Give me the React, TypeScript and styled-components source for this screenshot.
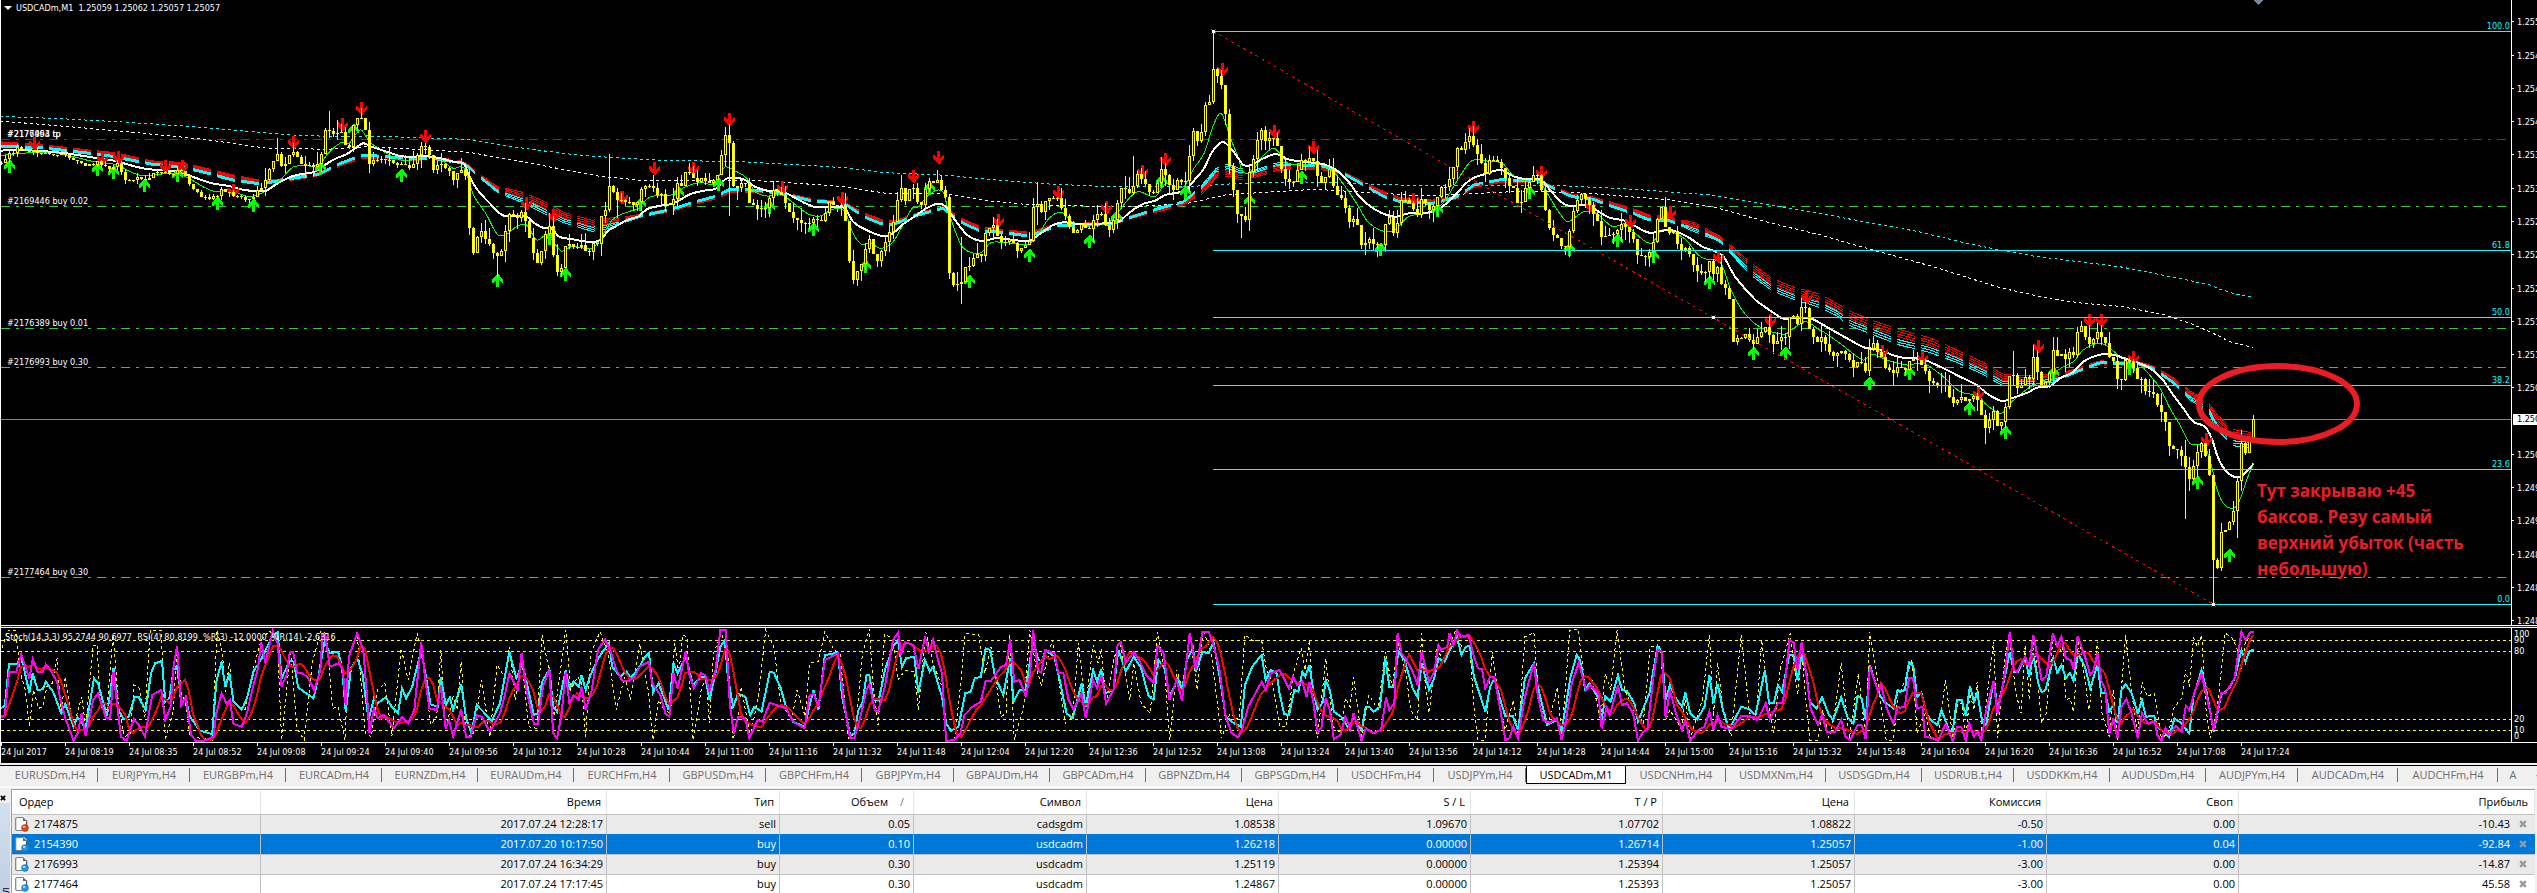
import React from "react";
import styled, { createGlobalStyle, css } from "styled-components";

const GlobalStyle = createGlobalStyle`
  * { box-sizing: border-box; }
  body { margin: 0; background: #f0f0f0; overflow: hidden; }
`;

const chartFont = css`
  font-family: "DejaVu Sans Condensed", "DejaVu Sans", sans-serif;
  font-size: 9px;
  line-height: 12px;
`;

/* ---------- recorded series ---------- */

type Pt = [number, number];
interface Block {
  x: number;
  y: number;
  sx: number;
  sy: number;
  d: string;
}

const parse = (d: string): Pt[] =>
  d
    .trim()
    .split(/\s+/)
    .map((p) => p.split(",").map(Number) as Pt);

/* joins blocks into one series that always advances in time */
const join = (blocks: Block[]): Pt[] => {
  const out: Pt[] = [];
  blocks.forEach((b) =>
    parse(b.d).forEach(([px, py]) => {
      const x = b.x + px / b.sx;
      if (!out.length || x > out[out.length - 1][0] + 0.5) out.push([x, b.y + py / b.sy]);
    })
  );
  return out;
};

const place = (blocks: Block[]): Pt[] =>
  blocks.flatMap((b) => parse(b.d).map(([px, py]) => [b.x + px / b.sx, b.y + py / b.sy] as Pt));

const frames = [
  { x: 0, y: 0, sx: 2.45, sy: 3 },
  { x: 600, y: 80, sx: 2.45, sy: 3 },
  { x: 1180, y: 0, sx: 2.45, sy: 3 },
  { x: 1700, y: 200, sx: 3, sy: 3 },
  { x: 2080, y: 280, sx: 3, sy: 3 },
];
const oscFrames = [
  { x: 0, y: -18, sx: 2.45, sy: 3 },
  { x: 640, y: -18, sx: 2.45, sy: 3 },
  { x: 1280, y: -18, sx: 2.45, sy: 3 },
  { x: 1900, y: -18, sx: 2.46, sy: 3 },
];
const blocks = (fr: typeof frames, ds: string[]): Block[] => ds.map((d, i) => ({ ...fr[i], d }));

const priceData = [
  "2,488 10,480 25,460 40,445 70,450 85,455 130,458 165,470 190,488 215,497 240,485 265,505 285,490 305,540 330,535 360,540 375,520 410,515 415,530 440,510 465,550 490,585 510,597 530,590 545,565 570,585 595,600 620,595 630,575 650,545 665,490 680,460 692,515 705,470 718,455 735,490 760,500 785,490 790,415 800,380 815,400 835,395 852,460 865,370 880,345 893,360 897,440 907,510 915,470 935,480 950,480 970,500 985,490 1005,500 1020,470 1035,435 1042,440 1052,470 1060,505 1085,490 1100,515 1112,540 1125,515 1138,510 1145,590 1152,750 1160,755 1170,700 1180,695 1195,730 1210,765 1218,770 1230,755 1238,690 1248,640 1258,640 1270,665 1280,620 1290,690 1300,720 1310,790 1320,795 1330,720 1345,680 1352,740 1358,800 1368,830 1378,800 1388,695 1397,745 1415,745 1428,730 1440,770 1450,730 1462,735 1470,650 1482,635 1495,540 1505,590 1520,605 1535,600 1550,620 1565,600",
  "75,375 90,360 102,320 112,318 128,320 135,345 148,335 160,370 178,375 182,300 195,325 205,290 215,265 222,285 232,310 245,295 255,295 270,315 280,295 290,270 300,200 308,155 318,200 320,265 328,340 340,310 355,310 368,380 380,380 400,390 408,370 418,335 430,335 445,345 455,380 465,400 475,410 490,425 505,432 515,430 525,415 538,435 548,405 558,370 590,372 595,420 605,430 612,590 622,600 632,560 642,550 652,495 662,475 672,540 682,540 692,500 705,465 717,440 722,385 735,315 748,370 758,320 770,322 780,380 790,370 800,300 812,315 822,290 830,315 845,340 848,490 858,610 870,625 885,605 895,555 905,555 917,528 935,525 945,440 965,440 975,475 985,490 1000,485 1008,435 1015,530 1030,500 1042,500 1052,480 1060,380 1072,378 1082,395 1092,360 1105,355 1118,355 1125,375 1138,400 1143,435 1155,460 1170,450 1180,425 1192,460 1205,430 1215,410 1230,400 1240,445 1250,445 1262,400 1270,340 1280,315 1293,345 1305,330 1310,275 1320,295 1330,300 1340,325 1352,345 1362,345 1368,265 1382,270 1392,310 1402,330 1415,300 1428,315 1438,290 1445,210 1455,140 1468,205 1478,100 1485,70 1499,70",
  "81,197 92,240 100,240 103,318 110,320 112,475 122,505 130,565 132,620 142,640 152,655 160,655 162,545 172,505 182,460 190,415 200,385 212,430 222,405 232,420 240,440 250,530 262,545 275,545 285,520 297,480 310,490 320,460 330,500 340,550 355,530 362,500 368,520 378,580 395,600 405,630 415,670 430,655 437,700 447,750 458,720 475,730 495,730 505,660 512,650 515,700 530,695 535,610 550,595 565,610 580,650 592,590 605,630 615,635 628,600 633,555 650,560 662,530 672,480 680,435 690,450 700,415 712,405 720,450 735,478 748,520 758,480 770,475 780,490 790,515 800,550 815,560 828,615 840,610 848,545 862,535 872,510 880,550 888,595 898,650 907,700 920,700 933,740 945,740 955,675 965,615 975,590 985,580 997,610 1008,630 1025,665 1035,730 1045,700 1060,710 1075,675 1088,680 1100,700 1112,720 1122,775 1132,770 1148,760 1162,715 1172,620 1185,625 1190,710 1205,680 1212,710 1222,755 1240,740 1250,770 1260,815 1272,822 1285,815 1297,780 1308,825 1318,800 1328,870 1338,870 1345,895 1348,1050 1358,1018 1370,1020 1380,995 1392,1015 1405,1028 1425,995 1437,975 1447,1025 1460,1040",
  "235,405 255,410 268,352 285,350 293,375 305,318 318,320 328,395 340,410 352,425 365,410 375,430 388,455 400,470 412,460 425,455 437,470 450,490 462,505 475,480 487,490 500,535 508,430 520,430 530,455 545,475 557,510 570,515 582,515 595,500 620,505 632,475 650,475 655,505 668,490 680,525 690,545 705,555 725,550 740,565 750,605 765,605 775,590 790,590 800,608 815,585 835,605 845,660 857,683 870,650 880,630 893,685 905,665 917,620 928,525 940,520 950,560 965,550 978,520 990,540 1000,460 1012,520 1025,560 1037,550 1048,510 1060,450 1073,475 1085,455 1097,475 1108,455 1120,470 1133,380 1145,385 1157,410 1170,435 1182,410 1195,385 1207,430 1220,435 1230,485 1243,480 1253,550",
  "113,310 123,305 125,245 137,235 150,250 162,275 173,305 185,295 197,340 210,342 222,350 234,385 246,400 258,440 270,520 282,500 294,505 306,530 318,565 330,600 342,540 354,510 366,485 378,540 390,605 402,910 413,850 424,745 436,750 448,720 460,695 472,595 484,485 496,520 506,520 509,415 520,415",
];

const slowData = [
  "0,452 40,450 100,453 150,458 200,467 240,475 280,482 320,496 360,507 400,511 440,516 480,534 520,550 560,558 600,570 650,573 680,550 720,527 770,516 790,500 820,477 850,462 870,445 890,430 910,440 940,452 980,468 1010,471 1040,468 1080,475 1110,485 1137,492 1150,530 1170,570 1200,610 1230,645 1260,648 1290,650 1310,670 1330,683 1350,685 1370,710 1400,717 1430,724 1460,725 1475,715 1490,692 1510,678 1540,658 1567,648",
  "60,425 100,402 120,385 150,377 180,370 220,343 250,333 285,325 310,296 350,297 380,320 410,332 440,332 465,345 500,368 530,382 570,380 600,385 620,425 650,448 690,468 715,462 740,435 770,410 800,385 825,372 845,378 870,420 900,465 935,483 970,475 1050,482 1080,460 1110,435 1135,427 1170,432 1240,430 1270,425 1300,395 1330,372 1360,362 1385,345 1420,337 1435,330 1460,295 1480,265 1500,215 1525,186 1545,205 1567,240",
  "120,445 140,480 155,495 175,495 200,478 235,462 265,478 300,485 350,492 380,508 410,540 440,590 480,630 525,650 560,640 600,640 640,622 670,590 710,540 740,525 785,510 820,530 850,538 885,540 910,575 945,615 1000,615 1020,630 1050,652 1090,662 1110,675 1150,698 1200,690 1240,708 1280,740 1330,768 1360,830 1410,900 1430,918 1450,935 1480,957 1510,953 1545,955 1567,968",
  "365,372 400,392 450,420 495,443 530,447 560,458 600,472 660,475 720,500 780,530 830,555 860,580 905,603 940,593 985,577 1010,563 1050,558 1080,535 1120,515 1150,485 1195,465 1230,463 1260,470",
  "125,233 165,245 210,265 245,295 280,345 310,385 340,425 375,440 395,475 415,535 440,575 470,592 495,580 520,552",
];

const fastData = [
  "0,467 50,460 130,458 180,470 230,485 290,495 310,510 350,527 430,520 470,540 500,562 530,575 560,570 610,590 640,580 670,555 690,535 720,500 785,495 800,465 835,428 855,430 870,405 885,390 905,425 930,447 970,475 1000,482 1040,470 1080,480 1110,505 1137,505 1160,585 1190,640 1220,705 1245,700 1265,680 1290,675 1315,720 1340,705 1375,753 1400,740 1450,745 1470,720 1500,660 1540,635 1567,625",
  "100,375 125,350 175,345 210,320 245,308 280,310 305,262 330,272 360,295 380,335 410,348 445,345 480,375 510,402 540,408 570,388 600,395 620,460 640,492 665,490 685,505 715,490 740,440 765,385 780,380 805,345 840,335 855,400 885,495 915,520 935,517 960,487 1050,492 1075,460 1100,415 1130,397 1160,428 1240,432 1270,395 1300,350 1320,335 1360,350 1385,312 1430,320 1455,265 1480,220 1500,145 1515,105 1525,105 1545,175 1567,245",
  "130,440 150,510 175,520 195,480 230,445 265,490 300,492 350,495 380,520 430,605 460,665 495,692 525,690 560,650 620,635 650,600 680,540 715,482 760,485 790,490 815,525 850,545 880,545 900,580 930,640 950,665 970,650 990,635 1020,640 1060,680 1090,672 1120,705 1155,730 1180,690 1205,695 1240,720 1270,765 1290,778 1325,790 1350,870 1380,935 1420,980 1480,1003 1500,988 1530,965 1550,975 1567,990",
  "370,395 420,430 490,480 515,462 560,480 620,495 670,490 730,530 780,575 835,588 860,615 905,640 930,610 1000,555 1050,545 1075,510 1120,485 1150,450 1195,430 1225,440 1260,470",
  "165,240 200,275 240,325 270,385 300,435 330,490 375,500 395,560 410,625 430,670 455,685 475,670 500,600 520,550",
];

const aquaBandData = [
  "0,438 100,443 220,460 280,470 340,485 370,492 450,502 510,520 570,540 640,552 700,538 780,523 830,492 890,465 1000,475 1060,475 1137,490 1180,535 1220,575 1280,602 1335,635 1380,662 1450,688 1490,680 1567,650",
  "100,408 170,390 220,370 285,348 320,327 390,332 440,340 510,360 600,372 650,412 690,432 720,433 770,408 840,385 890,430 930,452 985,457 1050,468 1120,438 1250,433 1310,408 1370,385 1430,365 1475,320 1510,270 1540,258 1567,272",
  "150,512 180,515 240,492 350,498 400,520 450,555 500,590 540,605 620,610 680,590 720,555 790,538 880,545 960,590 1010,597 1060,620 1110,640 1150,660 1200,662 1260,690 1320,720 1360,770 1400,820 1450,865 1500,890 1567,915",
  "410,340 450,370 510,393 600,428 690,450 770,480 850,517 910,552 1000,550 1070,540 1130,515 1200,488 1260,490",
  "165,248 220,265 280,308 330,355 385,390 410,440 460,490 520,495",
];
const redBandData = [
  "0,430 100,438 220,455 280,462 340,478 370,487 450,492 510,511 570,529 640,546 700,540 780,523 830,495 890,470 1000,477 1060,474 1137,489 1180,532 1220,565 1280,585 1335,615 1380,645 1450,670 1490,663 1567,648",
  "100,405 170,392 220,373 285,352 320,333 390,332 440,340 510,358 600,372 650,405 690,423 720,428 770,406 840,384 890,422 930,443 985,453 1050,461 1120,435 1250,432 1310,408 1370,390 1430,370 1475,335 1510,285 1540,278 1567,290",
  "150,530 180,527 240,505 350,505 400,520 450,550 500,580 540,598 620,605 680,592 720,558 790,542 880,545 960,587 1010,595 1060,612 1110,630 1150,650 1200,655 1260,675 1320,710 1360,755 1400,800 1450,845 1500,870 1567,893",
  "410,320 450,345 510,370 600,400 690,425 770,460 850,497 910,533 1000,535 1070,527 1130,510 1200,487 1260,489",
  "165,247 220,262 280,298 330,340 385,375 410,415 460,460 520,470",
];
const aquaDotData = [
  "0,349 150,356 300,366 450,378 600,393 700,404 800,409 900,408 1000,412 1140,418 1200,430 1300,448 1400,463 1470,470",
  "0,232 150,241 350,245 450,252 600,263 700,278 850,286 950,298 1100,312 1270,321 1440,320 1567,310",
  "200,548 280,545 400,549 600,558 800,555 900,555 1100,567 1300,585 1400,605 1567,640",
  "360,42 500,67 650,94 800,130 900,150 1000,168 1150,187 1260,200",
  "335,3 390,15 420,28 470,43 520,51",
];
const whiteDotData = [
  "0,363 200,383 350,400 500,418 650,444 800,448 900,440 1150,457 1300,490 1400,513 1470,529",
  "0,293 100,301 350,300 450,307 600,320 700,340 850,342 950,362 1050,374 1300,381 1440,370 1540,343",
  "90,588 130,583 220,576 330,568 430,575 600,588 680,583 850,573 1000,580 1200,600 1320,625 1450,670 1567,704",
  "365,106 500,145 700,200 900,263 1050,296 1150,310 1260,319",
  "180,90 250,103 330,130 390,155 450,185 520,203",
];
const sellData = [
  "83,428 250,475 288,470 405,497 446,498 572,570 719,427 837,373 885,324 1042,408 1288,608 1356,645 1523,590",
  "52,352 132,265 229,265 317,118 445,320 592,355 768,287 827,232 974,420 1121,337 1239,382 1327,273 1385,238",
  "102,208 230,392 327,442 572,597 719,382 885,515 1005,615 1102,664 1200,637 1317,767 1445,960",
  "317,292 545,453 665,470 833,578 1013,438 1168,360 1204,360",
  "160,230 377,477",
];
const buyData = [
  "22,497 237,508 276,517 354,556 434,525 531,610 620,615 785,503 865,390 982,525 1217,840 1344,715 1384,822",
  "99,373 190,340 290,312 414,380 521,447 649,557 806,325 903,604 1050,525 1197,482 1265,412 1375,302 1434,335",
  "168,602 296,530 491,748 629,630 854,575 952,746 1070,720 1158,767 1296,847 1403,1060 1482,1060",
  "507,550 627,518 806,623 914,695 1058,520",
  "147,265 350,606 446,826",
];

const stochData = [
  "0,322 12,315 22,185 40,185 52,133 72,205 80,147 92,185 105,185 112,163 122,178 140,215 148,270 160,325 180,392 190,370 200,310 210,378 228,270 240,250 260,325 270,325 278,185 296,380 310,392 328,328 340,345 355,380 373,255 395,240 405,330 418,290 425,170 434,107 444,285 455,260 468,375 480,392 500,392 523,380 530,310 543,250 555,280 563,270 572,342 592,350 605,310 618,240 632,175 640,97 650,160 668,63 680,100 690,230 702,195 710,127 718,125 728,188 740,188 755,205 770,240 785,180 790,75 797,75 808,170 830,160 840,180 847,285 855,140 875,70 890,120 900,270 905,370 916,295 925,325 940,315 965,355 985,320 1000,340 1015,300 1032,97 1042,210 1052,295 1070,300 1080,225 1092,355 1100,330 1110,380 1130,297 1142,380 1152,382 1168,315 1180,320 1200,365 1225,310 1237,255 1248,190 1268,240 1278,130 1290,240 1308,342 1318,342 1330,230 1346,178 1355,370 1365,385 1375,320 1386,185 1395,280 1405,255 1418,270 1425,230 1435,300 1450,240 1465,120 1482,88 1495,120 1510,180 1525,213 1540,213 1555,200 1567,170",
  "0,155 22,155 30,220 50,255 62,310 72,320 82,190 92,235 112,125 120,190 132,235 150,190 160,195 170,245 185,180 197,60 210,60 220,280 230,372 240,320 258,325 268,385 288,330 300,335 318,278 345,290 358,295 375,335 403,355 415,260 425,250 437,290 453,150 485,130 500,280 515,385 525,385 540,320 555,240 562,222 575,300 583,305 600,230 620,90 632,68 640,130 650,97 670,105 682,178 698,80 708,125 718,88 728,140 740,190 750,393 770,390 785,370 795,315 815,290 835,275 847,212 860,212 885,170 897,165 907,88 917,215 930,210 945,258 955,200 963,60 975,180 983,188 993,120 1015,130 1025,190 1037,190 1050,270 1062,298 1082,250 1092,325 1110,210 1120,235 1130,195 1142,280 1160,240 1170,105 1178,97 1190,158 1210,125 1225,155 1240,195 1258,218 1268,107 1283,130 1297,270 1315,210 1328,272 1347,68 1362,180 1378,65 1393,65 1405,105 1420,180 1435,320 1450,370 1465,382 1475,360 1490,290 1510,245 1523,215 1533,240 1545,190 1567,180",
  "0,210 22,235 32,200 42,225 55,215 65,260 72,215 82,280 92,368 102,350 112,265 122,300 132,388 148,375 160,320 172,355 180,310 200,392 210,355 230,370 248,358 260,262 268,300 280,280 288,70 298,130 310,150 325,185 337,225 347,125 365,215 378,185 388,105 395,120 410,110 415,70 425,105 434,62 443,80 462,75 475,140 485,175 495,178 503,235 515,200 525,200 540,300 552,390 562,385 572,350 583,385 600,260 622,160 632,260 645,330 660,338 678,325 690,390 700,335 715,220 732,158 750,240 760,225 780,250 788,355 800,295 808,315 828,225 838,285 850,280 865,310 877,392 890,365 900,360 915,200 925,118 935,125 945,325 955,240 970,310 985,360 993,330 1005,392 1025,360 1040,350 1052,305 1062,360 1072,315 1082,350 1105,358 1130,318 1150,318 1170,330 1190,280 1200,328 1220,280 1232,280 1248,90 1258,97 1268,180 1278,97 1288,180 1300,295 1318,345 1328,315 1340,365 1360,365 1375,330 1385,380 1397,390 1415,345 1425,345 1435,388 1445,170 1465,245 1473,225 1485,290 1497,325 1503,340 1513,290",
  "0,293 12,290 22,205 32,205 42,295 55,290 62,380 82,385 93,393 112,342 130,393 140,350 150,350 162,393 170,340 182,380 192,365 200,392 212,300 230,212 240,312 258,190 270,65 280,180 288,185 308,140 318,170 328,75 340,150 348,210 360,200 376,70 387,108 397,80 408,145 420,150 427,178 437,78 455,140 468,195 475,185 486,128 495,210 505,240 515,372 525,325 535,385 545,290 557,268 570,310 585,385 595,310 610,340 627,335 633,375 643,393 653,355 662,375 678,348 693,365 703,288 712,300 725,245 742,193 755,260 772,360 790,250 800,250 823,205 832,130 840,65 850,90 862,67 870,67",
];
const rsiData = [
  "0,298 12,285 22,163 42,163 52,140 72,248 80,190 92,240 105,238 112,215 130,245 150,310 160,282 180,350 190,322 210,355 230,205 240,220 262,318 278,175 290,300 303,327 315,320 330,260 340,262 357,300 370,190 380,160 397,153 405,275 415,265 425,180 434,170 444,280 455,262 465,320 490,362 520,372 530,215 543,155 552,230 562,190 572,275 592,300 605,265 622,180 632,165 645,135 668,75 680,67 690,205 710,152 720,155 730,232 750,250 768,265 780,200 795,95 808,130 828,125 838,170 847,305 860,175 875,145 888,190 903,330 916,265 925,280 945,262 960,290 975,310 985,235 995,265 1010,230 1032,120 1042,190 1055,283 1072,290 1080,200 1092,285 1102,262 1110,300 1130,222 1142,325 1155,370 1168,285 1205,332 1225,280 1248,125 1265,205 1280,160 1308,315 1318,310 1328,215 1346,178 1355,290 1365,305 1386,180 1395,235 1405,215 1418,230 1425,195 1435,240 1445,200 1465,145 1492,100 1500,170 1520,200 1535,183 1545,205 1567,170",
  "0,130 10,145 22,130 32,248 45,220 55,250 70,300 82,160 92,190 112,140 130,225 150,200 160,200 170,270 185,190 197,110 208,90 215,200 228,290 240,252 258,260 270,315 280,290 298,305 318,185 328,188 345,235 360,300 375,335 403,350 425,240 437,300 453,135 485,128 495,260 515,375 525,372 535,300 545,280 555,195 562,195 572,270 585,270 600,180 620,110 632,90 642,170 652,145 672,140 682,248 698,150 710,185 718,170 730,220 740,260 750,340 762,362 780,350 797,250 810,245 820,205 835,200 847,115 858,120 870,200 890,255 907,145 915,275 930,240 945,240 963,90 975,148 985,155 993,120 1015,140 1030,220 1045,310 1060,325 1082,220 1092,290 1110,180 1120,215 1130,178 1140,250 1160,240 1172,120 1190,185 1210,140 1228,175 1245,255 1258,270 1270,150 1285,175 1297,260 1318,205 1328,240 1340,150 1355,115 1362,185 1378,125 1393,130 1405,95 1420,200 1435,320 1455,340 1472,350 1482,225 1500,170 1523,135 1533,210 1545,180 1560,190 1567,250",
  "0,285 10,312 22,315 35,240 45,245 55,185 62,200 72,165 82,245 92,300 105,275 112,210 122,240 132,305 150,320 170,358 180,320 200,360 210,292 220,292 230,305 245,290 258,145 268,230 278,230 290,125 305,150 325,235 337,262 347,160 365,240 378,205 388,145 403,155 420,110 434,85 445,135 455,110 465,108 475,200 490,255 503,305 515,230 525,205 540,270 552,318 570,318 583,360 600,205 622,160 635,250 655,345 678,330 690,360 700,290 712,200 727,135 735,150 748,240 758,220 780,265 788,330 797,258 810,275 828,195 838,240 850,243 868,280 877,335 890,295 905,250 925,108 935,125 945,270 955,225 970,265 985,290 993,248 1005,310 1022,328 1040,290 1052,195 1062,280 1072,222 1085,300 1100,358 1115,325 1130,290 1150,298 1165,315 1188,180 1198,278 1210,278 1220,225 1230,245 1248,135 1258,135 1268,210 1278,135 1290,190 1298,275 1315,295 1328,262 1345,315 1355,330 1375,262 1390,320 1405,340 1415,258 1425,265 1435,330 1445,165 1465,245 1480,275 1503,295 1513,240",
  "0,245 12,240 22,157 33,170 42,262 53,248 65,310 75,330 92,345 102,300 122,365 130,362 140,270 152,270 162,318 172,228 182,275 190,248 203,340 212,345 230,212 240,290 258,200 270,125 280,185 290,185 308,145 318,200 328,130 340,220 348,247 358,240 377,145 387,188 397,165 408,205 418,188 427,212 437,130 455,170 468,235 486,162 495,250 505,250 515,305 525,285 535,340 545,240 555,223 570,250 585,310 595,270 605,320 625,318 633,350 650,365 662,382 675,325 690,338 712,370 722,260 742,180 752,230 772,365 790,255 810,235 825,200 832,160 840,120 850,155 860,122 870,120",
];
const williamsData = [
  "0,130 20,60 38,60 50,190 62,240 72,350 82,240 95,295 105,290 115,230 128,220 140,145 150,310 160,200 180,350 200,260 210,350 228,105 238,105 246,290 262,300 277,75 290,280 305,380 320,370 328,225 340,230 355,320 368,60 395,60 405,390 425,300 434,110 444,250 455,280 465,380 520,390 532,60 545,130 552,245 562,160 572,280 600,300 622,170 640,90 660,62 680,100 690,390 712,120 728,355 745,390 765,160 785,65 800,70 815,295 828,290 845,390 855,130 875,70 895,370 910,380 925,240 943,220 960,380 983,115 1000,210 1022,70 1035,130 1055,345 1070,320 1080,120 1092,360 1110,260 1120,300 1130,155 1142,385 1160,370 1180,210 1200,380 1218,165 1235,200 1248,110 1262,270 1278,140 1295,350 1315,355 1328,75 1345,180 1358,320 1386,60 1398,240 1415,200 1425,220 1435,380 1448,130 1470,65 1490,130 1510,300 1530,200 1545,270 1567,100",
  "0,90 20,240 32,390 45,270 60,300 75,310 85,100 95,190 105,75 115,80 130,390 150,240 162,200 170,340 180,130 200,70 215,130 228,390 240,330 248,230 270,380 290,260 308,60 328,110 345,280 372,330 385,240 405,320 415,160 437,155 453,65 475,120 490,130 510,385 528,370 545,130 562,58 570,210 583,345 600,70 620,90 632,210 650,180 672,185 682,300 700,65 718,160 740,230 750,390 770,390 785,230 797,70 830,75 845,190 860,110 885,320 897,310 905,75 917,390 940,290 955,60 970,170 983,225 1010,90 1025,200 1042,340 1060,320 1074,100 1092,290 1110,105 1122,160 1130,115 1142,280 1160,150 1175,95 1200,270 1210,160 1228,280 1250,310 1268,65 1285,180 1298,390 1315,180 1330,240 1347,70 1365,240 1380,60 1400,130 1425,385 1445,310 1468,330 1482,75 1500,90 1523,90 1535,180 1550,220 1567,350",
  "0,380 15,350 35,180 52,115 62,180 72,90 82,290 92,385 112,145 130,350 150,370 160,265 172,290 180,200 200,380 218,255 240,300 258,125 275,230 290,100 310,200 320,300 337,330 347,70 355,210 365,310 385,110 400,160 430,62 445,110 465,110 475,290 485,390 503,390 520,125 540,300 552,360 572,270 583,385 600,80 622,68 635,280 655,350 680,230 690,385 710,62 730,58 748,230 765,210 785,330 797,190 810,240 826,60 845,240 870,310 890,340 907,110 932,110 945,330 955,300 983,355 993,270 1005,385 1035,270 1052,75 1062,320 1072,160 1085,290 1105,380 1130,75 1150,310 1168,310 1180,90 1200,300 1210,370 1225,180 1250,70 1268,255 1278,130 1298,390 1318,390 1330,300 1345,385 1360,300 1375,160 1395,385 1417,190 1435,385 1445,65 1465,220 1485,390 1503,390 1515,240",
  "0,250 15,200 30,150 42,370 62,310 75,385 92,390 112,210 130,385 142,280 152,280 162,385 172,250 182,300 190,215 203,385 215,250 230,95 240,385 258,140 268,70 285,250 298,310 308,105 318,270 330,75 348,340 360,310 377,75 390,130 400,110 408,270 418,265 427,305 440,80 465,300 486,95 497,310 515,380 525,240 535,390 555,75 570,250 585,370 595,215 608,260 625,250 643,385 660,370 675,290 693,265 703,180 712,230 722,85 732,110 742,75 752,290 763,385 780,300 800,70 815,80 828,110 840,180 850,90 862,85 870,95",
];

/* ---------- series helpers ---------- */

const BAR = 4;
const BARS = 564;
const barX = (i: number) => 1 + i * BAR;

const at = (s: Pt[], x: number): number => {
  if (x <= s[0][0]) return s[0][1];
  for (let i = 1; i < s.length; i++) {
    if (x <= s[i][0]) {
      const [x0, y0] = s[i - 1];
      const [x1, y1] = s[i];
      return y0 + ((y1 - y0) * (x - x0)) / (x1 - x0);
    }
  }
  return s[s.length - 1][1];
};

const line = (pts: Pt[]) => pts.map(([x, y]) => `${x.toFixed(1)},${y.toFixed(1)}`).join(" ");

/* Catmull-Rom curve, rendered as cubic Béziers */
const smooth = (p: Pt[]): string => {
  let d = `M${p[0][0].toFixed(1)} ${p[0][1].toFixed(1)}`;
  for (let i = 0; i < p.length - 1; i++) {
    const a = p[Math.max(0, i - 1)];
    const b = p[i];
    const c = p[i + 1];
    const e = p[Math.min(p.length - 1, i + 2)];
    const t = (c[0] - b[0]) / 3;
    const sb = (c[1] - a[1]) / (c[0] - a[0]);
    const sc = (e[1] - b[1]) / (e[0] - b[0]);
    d += `C${(b[0] + t).toFixed(1)} ${(b[1] + sb * t).toFixed(1)} ${(c[0] - t).toFixed(1)} ${(c[1] - sc * t).toFixed(1)} ${c[0].toFixed(1)} ${c[1].toFixed(1)}`;
  }
  return d;
};

const noise = (i: number) => {
  const v = Math.sin(i * 127.1 + 11.7) * 43758.5453;
  return v - Math.floor(v);
};

const price = join(blocks(frames, priceData));
const aquaBand = join(blocks(frames, aquaBandData));
const redBand = join(blocks(frames, redBandData));
const stoch = join(blocks(oscFrames, stochData));
const rsi = join(blocks(oscFrames, rsiData));
const williams = join(blocks(oscFrames, williamsData));

const signal: Pt[] = Array.from({ length: BARS }, (_, i) => {
  const x = barX(i);
  const v = [0, 1, 2, 3].reduce((a, k) => a + at(stoch, x - k * BAR), 0) / 4;
  return [x, v] as Pt;
});

interface Candle {
  x: number;
  top: number;
  bottom: number;
  high: number;
  low: number;
  up: boolean;
}

/* wicks that stand far out of the usual range: bar x -> [high y, low y] */
const spikes: Record<number, [number, number]> = {
  1213: [31, 104],
  277: [138, 157],
  329: [111, 138],
  497: [252, 278],
  609: [154, 212],
  617: [188, 218],
  729: [124, 216],
  961: [237, 304],
  1037: [182, 225],
  1133: [156, 195],
  1241: [215, 238],
  1985: [410, 444],
  2013: [351, 385],
  2185: [440, 519],
  2213: [482, 604],
  2237: [476, 538],
  2253: [415, 419],
};

const candles: Candle[] = Array.from({ length: BARS }, (_, i) => {
  const x = barX(i);
  const open = at(price, x - BAR) + (noise(i) - 0.5) * 4;
  const close = at(price, x) + (noise(i + 1) - 0.5) * 4;
  const calm = x < 260 ? 0.35 : 1;
  const top = Math.round(Math.min(open, close));
  const bottom = Math.max(top + 1, Math.round(Math.max(open, close)));
  const reach = (k: number) => Math.round(Math.pow(noise(i * 3 + k), 2) * 13 * calm);
  const s = spikes[x];
  return {
    x,
    top,
    bottom,
    high: s ? Math.min(s[0], top) : top - reach(1),
    low: s ? Math.max(s[1], bottom) : bottom + reach(2),
    up: close < open,
  };
});

const band = (s: Pt[], other: Pt[], n: number) => {
  let d = "";
  for (let k = 0; k < n; k++) {
    for (let x = 1; x < 2253; x += 24) {
      for (let q = x; q <= Math.min(x + 18, 2254); q += 3) {
        const apart = Math.abs(at(s, q) - at(other, q));
        const gap = apart < 4 ? 1 : Math.min(2.5, apart / 3);
        const y = at(s, q) + (k - (n - 1) / 2) * gap;
        d += `${q === x ? "M" : "L"}${q} ${y.toFixed(1)}`;
      }
    }
  }
  return d;
};

/* ---------- layout ---------- */

const Page = styled.div`
  display: flex;
  flex-direction: column;
  height: 100vh;
  overflow: hidden;
  background: #f0f0f0;
`;

const ChartWindow = styled.section`
  flex: none;
  background: #000;
  border-left: 1px solid #fff;
  color: #fff;
  ${chartFont}
`;

const PlotRow = styled.div<{ $height: number }>`
  display: flex;
  height: ${(p) => p.$height}px;
  border-bottom: 1px solid #fff;
`;

const Divider = styled.div`
  height: 2px;
  background: #2a2a2a;
  border-bottom: 1px solid #fff;
`;

const Plot = styled.div`
  flex: 1;
  min-width: 0;
  position: relative;
  border-right: 1px solid #fff;
`;

const Canvas = styled.svg`
  display: block;
  width: 100%;
  height: 100%;
  overflow: hidden;
  text {
    ${chartFont}
    white-space: pre;
  }
`;

const Scale = styled.div`
  flex: none;
  width: 25px;
  position: relative;
  overflow: hidden;
`;

const ScaleMark = styled.span<{ $boxed?: boolean; $tick?: boolean; $left: number }>`
  position: absolute;
  left: ${(p) => (p.$boxed ? 1 : 0)}px;
  right: 0;
  height: ${(p) => (p.$boxed ? 11 : 12)}px;
  line-height: ${(p) => (p.$boxed ? 11 : 12)}px;
  padding-left: ${(p) => p.$left - (p.$boxed ? 1 : 0)}px;
  white-space: nowrap;
  color: ${(p) => (p.$boxed ? "#000" : "#fff")};
  background: ${(p) => (p.$boxed ? "#fff" : "none")};
  &::before {
    content: "";
    display: ${(p) => (p.$tick ? "block" : "none")};
    position: absolute;
    left: 0;
    top: 5px;
    width: 2px;
    height: 1px;
    background: #fff;
  }
`;

const Note = styled.p`
  position: absolute;
  left: 2256px;
  top: 478px;
  width: 216px;
  margin: 0;
  color: #ed1c24;
  font: bold 17px/26px "Open Sans", "Noto Sans", sans-serif;
`;

const TimeScale = styled.ol`
  display: flex;
  height: 20px;
  margin: 0;
  padding: 0;
  list-style: none;
  overflow: hidden;
`;

const TimeMark = styled.li`
  flex: none;
  width: 64px;
  padding-top: 3px;
  white-space: nowrap;
  position: relative;
  &::before {
    content: "";
    position: absolute;
    left: 0;
    top: 0;
    width: 1px;
    height: 3px;
    background: #fff;
  }
`;

const TabBar = styled.nav`
  flex: none;
  display: flex;
  align-items: flex-start;
  height: 23px;
  margin-top: 2px;
  padding-left: 2px;
  border-top: 1px solid #000;
  border-bottom: 2px solid #fafafa;
  overflow: hidden;
`;

const Tab = styled.button<{ $width: number; $active?: boolean }>`
  flex: none;
  width: ${(p) => p.$width}px;
  height: 18px;
  margin: 0;
  padding: 0;
  border: 0;
  font: 11px/18px "Open Sans", "Noto Sans", sans-serif;
  white-space: nowrap;
  background: none;
  color: #6d6d6d;
  position: relative;
  &::after {
    content: "";
    position: absolute;
    right: 0;
    top: 2px;
    height: 14px;
    border-right: 1px solid #6d6d6d;
  }
  &:nth-last-child(2)::after {
    display: none;
  }
  ${(p) =>
    p.$active &&
    css`
      margin-top: -1px;
      height: 19px;
      background: #fff;
      color: #000;
      border: 1px solid #000;
      border-top-color: #fff;
      &::after {
        display: none;
      }
    `}
`;

const TabScroll = styled.button`
  flex: none;
  margin-left: auto;
  width: 20px;
  height: 18px;
  padding: 0;
  border: 0;
  background: none;
  line-height: 0;
`;

const Terminal = styled.section`
  flex: 1;
  min-height: 0;
  display: flex;
  padding: 1px 2px 0 0;
`;

const SideStrip = styled.div`
  flex: none;
  width: 11px;
  display: flex;
  flex-direction: column;
  overflow: hidden;
`;

const CloseButton = styled.button`
  height: 14px;
  width: 6px;
  padding: 3px 0 0;
  border: 0;
  background: none;
  line-height: 0;
  text-align: left;
`;

const SideTitle = styled.div`
  flex: 1;
  width: 10px;
  background: linear-gradient(#bfd0e4, #d3e0ee);
  writing-mode: vertical-rl;
  transform: rotate(180deg);
  font: 10px/10px "Open Sans", "Noto Sans", sans-serif;
  color: #000;
`;

const TableBox = styled.div`
  flex: 1;
  min-width: 0;
  overflow: hidden;
  border: 1px solid #a0a0a0;
  border-width: 1px 0 0 1px;
  background: #fff;
`;

const Orders = styled.table`
  width: 100%;
  table-layout: fixed;
  border-collapse: separate;
  border-spacing: 0;
  font: 11px/16px "Open Sans", "Noto Sans", sans-serif;
  color: #000;
`;

const Head = styled.th<{ $first?: boolean; $last?: boolean }>`
  height: 24px;
  padding: ${(p) => (p.$first ? "0 0 0 7px" : p.$last ? "0 6px 0 0" : "0 5px 0 0")};
  font-weight: normal;
  text-align: ${(p) => (p.$first ? "left" : "right")};
  border-right: 1px solid #e5e5e5;
`;

const SortMark = styled.span`
  margin: 0 4px 0 12px;
  color: #777;
`;

const Row = styled.tr<{ $shade?: boolean; $selected?: boolean }>`
  background: ${(p) => (p.$selected ? "#0078d7" : p.$shade ? "#eaeaea" : "#fff")};
  color: ${(p) => (p.$selected ? "#fff" : "#000")};
`;

const Cell = styled.td<{ $selected?: boolean }>`
  height: 20px;
  padding: 0 3px 2px 0;
  text-align: right;
  white-space: nowrap;
  border-right: 1px solid #c0c0c0;
  border-top: 1px solid ${(p) => (p.$selected ? "#0078d7" : "#c0c0c0")};
`;

const OrderCell = styled(Cell)`
  padding: 0 0 2px 3px;
  text-align: left;
`;

const OrderLine = styled.span`
  display: flex;
  align-items: center;
  gap: 5px;
`;

const ProfitCell = styled(Cell)`
  padding-right: 7px;
  border-right-color: transparent;
`;

const ProfitLine = styled.span`
  display: flex;
  justify-content: flex-end;
  align-items: center;
  gap: 9px;
`;

const RowClose = styled.button`
  width: 8px;
  height: 8px;
  padding: 0;
  border: 0;
  background: none;
  line-height: 0;
`;

/* ---------- drawings ---------- */

const levels: [number, string][] = [
  [31, "100.0"],
  [250, "61.8"],
  [317, "50.0"],
  [385, "38.2"],
  [469, "23.6"],
  [604, "0.0"],
];

const orderLines: [number, string, string[]][] = [
  [139, "#f00000", ["#2176993 tp", "#2177464 tp"]],
  [206, "#32cd32", ["#2169446 buy 0.02"]],
  [328, "#32cd32", ["#2176389 buy 0.01"]],
  [367, "#32cd32", ["#2176993 buy 0.30"]],
  [577, "#32cd32", ["#2177464 buy 0.30"]],
];

const SellArrow = ({ x, y }: { x: number; y: number }) => (
  <g transform={`translate(${Math.round(x)} ${Math.round(y)})`}>
    <path d="M-1 -6H2V1L5 -2H6V1L3 5L1 7H0L-2 5L-5 1V-2H-4L-1 1Z" fill="#f00" />
  </g>
);

const BuyArrow = ({ x, y }: { x: number; y: number }) => (
  <g transform={`translate(${Math.round(x)} ${Math.round(y)})`}>
    <path d="M-1 7H2V0L5 3H6V0L3 -4L1 -6H0L-2 -4L-5 0V3H-4L-1 0Z" fill="#0f0" />
  </g>
);

const PriceChart = () => (
  <Canvas role="img" aria-label="USDCADm, M1">
    <g transform="translate(-1 0)">
      <g shapeRendering="crispEdges">
        {orderLines.map(([y, c]) => (
          <line key={y} x1={1} x2={2506} y1={y + 0.5} y2={y + 0.5} stroke={c} strokeDasharray="9 6 3 6" />
        ))}
        <line x1={1} x2="110%" y1={419.5} y2={419.5} stroke="#778899" />
        <path d="M2254 0H2263L2259 5H2258Z" fill="#778899" />
        <polyline points={line(join(blocks(frames, aquaDotData)))} fill="none" stroke="#0ff" strokeDasharray="3 3" />
        <polyline points={line(join(blocks(frames, whiteDotData)))} fill="none" stroke="#fff" strokeDasharray="3 3" />
        <path d={band(redBand, aquaBand, 4)} fill="none" stroke="#f00" />
        <path d={band(aquaBand, redBand, 3)} fill="none" stroke="#0ff" />
        <path d={smooth(join(blocks(frames, fastData)))} fill="none" stroke="#0f0" />
        <path d={smooth(join(blocks(frames, slowData)))} fill="none" stroke="#fffff0" strokeWidth={2} />
        {place(blocks(frames, sellData)).map(([x, y]) => (
          <SellArrow key={x} x={x} y={y} />
        ))}
        {place(blocks(frames, buyData)).map(([x, y]) => (
          <BuyArrow key={x} x={x} y={y} />
        ))}
        {candles.map((c) => (
          <g key={c.x}>
            <rect x={c.x} y={c.high} width={1} height={c.low - c.high} fill="#ff0" />
            <rect x={c.x - 1} y={c.top} width={3} height={c.bottom - c.top} fill="#ff0" />
            {c.bottom - c.top > 2 && (
              <rect
                x={c.x}
                y={c.top + 1}
                width={1}
                height={c.bottom - c.top - 2}
                fill={c.up ? "#000" : "#fffff0"}
              />
            )}
          </g>
        ))}
        <line x1={1213} y1={31} x2={2213} y2={604} stroke="#f00" strokeDasharray="3 4" />
        {levels.map(([y]) => (
          <line key={y} x1={1213} x2="110%" y1={y + 0.5} y2={y + 0.5} stroke="#0ff" />
        ))}
        {[
          [1213, 31],
          [1713, 317],
          [2213, 604],
        ].map(([x, y]) => (
          <g key={x}>
            <path d={`M${x - 2} ${y - 2}h1v1h-1zM${x + 2} ${y - 2}h1v1h-1zM${x - 2} ${y + 2}h1v1h-1zM${x + 2} ${y + 2}h1v1h-1z`} fill="#f00" />
            <rect x={x - 1} y={y - 1} width={3} height={3} fill="#fff" />
          </g>
        ))}
      </g>
      {orderLines.map(([y, , names]) =>
        names.map((n) => (
          <text key={y + n} x={7} y={y - 2} fill="#fff">
            {n}
          </text>
        ))
      )}
      <path d="M4 6H12L8 10Z" fill="#fff" />
      <text x={16} y={11} fill="#fff">
        {"USDCADm,M1  1.25059 1.25062 1.25057 1.25057"}
      </text>
      <ellipse cx={2278} cy={404} rx={79} ry={38} fill="none" stroke="#ed1c24" strokeWidth={6} />
    </g>
    {levels.map(([y, n]) => (
      <text key={n} x="100%" dx={-1} y={y - 2} textAnchor="end" fill="#0ff">
        {n}
      </text>
    ))}
  </Canvas>
);

const OscillatorChart = () => (
  <Canvas role="img" aria-label="Stochastic, RSI and Williams %R">
    <g transform="translate(-1 0)">
      <g shapeRendering="crispEdges" fill="none">
        {[12, 23, 91, 102].map((y) => (
          <line key={y} x1={1} x2="110%" y1={y + 0.5} y2={y + 0.5} stroke="#ff0" strokeDasharray="3 3" />
        ))}
        <polyline points={line(williams)} stroke="#ff0" strokeDasharray="3 3" />
        <polyline points={line(rsi)} stroke="#0ff" strokeWidth={2} />
        <polyline points={line(signal)} stroke="#f00" strokeWidth={2} />
        <polyline points={line(stoch)} stroke="#f0f" strokeWidth={2} />
      </g>
      <text x={5} y={12} fill="#fff">
        {"Stoch(14,3,3) 95.2744 90.6977  RSI(4) 80.8199  %R(3) -12.0000  %R(14) -2.6316"}
      </text>
    </g>
  </Canvas>
);

const Cross = ({ size, color }: { size: number; color: string }) => (
  <svg width={size} height={size} viewBox="0 0 7 7" aria-hidden="true">
    <path d="M1 1L6 6M6 1L1 6" stroke={color} strokeWidth={2} fill="none" />
  </svg>
);

const OrderIcon = ({ sell }: { sell?: boolean }) => (
  <svg width={14} height={16} viewBox="0 0 14 16" aria-hidden="true">
    <path d="M1 1H9L12 4V14H1Z" fill="#fff" />
    <path d="M8 1.5H2Q0.7 1.5 0.7 3V13Q0.7 14.5 2 14.5H7" fill="none" stroke="#808080" strokeWidth={1.2} />
    <path d="M8 1L12 5H8Z" fill="#666" />
    <path d="M11.6 4.5V9" stroke="#555" strokeWidth={1.2} />
    <circle cx={10} cy={12} r={3.4} fill={sell ? "#e04818" : "#1f9be8"} stroke={sell ? "#9c2a08" : "#1268a8"} strokeWidth={0.6} />
    <circle cx={9.1} cy={10.9} r={1.2} fill={sell ? "#ffa888" : "#a8dcff"} />
  </svg>
);

/* ---------- content ---------- */

const priceMarks: [number, string][] = [
  [21, "1.25535"],
  [55, "1.25495"],
  [88, "1.25455"],
  [121, "1.25415"],
  [154, "1.25375"],
  [188, "1.25335"],
  [221, "1.25295"],
  [254, "1.25255"],
  [288, "1.25215"],
  [321, "1.25175"],
  [354, "1.25135"],
  [387, "1.25095"],
  [454, "1.25015"],
  [487, "1.24975"],
  [520, "1.24935"],
  [554, "1.24895"],
  [587, "1.24855"],
  [620, "1.24815"],
];

const oscMarks: [number, string][] = [
  [6, "100"],
  [12, "90"],
  [23, "80"],
  [91, "20"],
  [102, "10"],
  [108, "0"],
];

const times =
  "2017 08:19 08:35 08:52 09:08 09:24 09:40 09:56 10:12 10:28 10:44 11:00 11:16 11:32 11:48 12:04 12:20 12:36 12:52 13:08 13:24 13:40 13:56 14:12 14:28 14:44 15:00 15:16 15:32 15:48 16:04 16:20 16:36 16:52 17:08 17:24".split(
    " "
  );

const tabs: [string, number][] = [
  ["EURUSDm,H4", 96],
  ["EURJPYm,H4", 92],
  ["EURGBPm,H4", 96],
  ["EURCADm,H4", 96],
  ["EURNZDm,H4", 96],
  ["EURAUDm,H4", 96],
  ["EURCHFm,H4", 96],
  ["GBPUSDm,H4", 96],
  ["GBPCHFm,H4", 96],
  ["GBPJPYm,H4", 92],
  ["GBPAUDm,H4", 96],
  ["GBPCADm,H4", 96],
  ["GBPNZDm,H4", 96],
  ["GBPSGDm,H4", 96],
  ["USDCHFm,H4", 96],
  ["USDJPYm,H4", 92],
  ["USDCADm,M1", 100],
  ["USDCNHm,H4", 100],
  ["USDMXNm,H4", 100],
  ["USDSGDm,H4", 96],
  ["USDRUB.t,H4", 92],
  ["USDDKKm,H4", 96],
  ["AUDUSDm,H4", 96],
  ["AUDJPYm,H4", 92],
  ["AUDCADm,H4", 100],
  ["AUDCHFm,H4", 100],
  ["A", 30],
];

const columns: [string, number][] = [
  ["Ордер", 249],
  ["Время", 346],
  ["Тип", 173],
  ["Объем", 134],
  ["Символ", 173],
  ["Цена", 192],
  ["S / L", 192],
  ["T / P", 192],
  ["Цена", 192],
  ["Комиссия", 192],
  ["Своп", 192],
  ["Прибыль", 296],
];

const orders = [
  ["2174875", "2017.07.24 12:28:17", "sell", "0.05", "cadsgdm", "1.08538", "1.09670", "1.07702", "1.08822", "-0.50", "0.00", "-10.43"],
  ["2154390", "2017.07.20 10:17:50", "buy", "0.10", "usdcadm", "1.26218", "0.00000", "1.26714", "1.25057", "-1.00", "0.04", "-92.84"],
  ["2176993", "2017.07.24 16:34:29", "buy", "0.30", "usdcadm", "1.25119", "0.00000", "1.25394", "1.25057", "-3.00", "0.00", "-14.87"],
  ["2177464", "2017.07.24 17:17:45", "buy", "0.30", "usdcadm", "1.24867", "0.00000", "1.25393", "1.25057", "-3.00", "0.00", "45.58"],
];
const SELECTED = 1;

export default function App() {
  return (
    <Page>
      <GlobalStyle />
      <ChartWindow>
        <PlotRow $height={626}>
          <Plot>
            <PriceChart />
            <Note>Тут закрываю +45 баксов. Резу самый верхний убыток (часть небольшую)</Note>
          </Plot>
          <Scale>
            {priceMarks.map(([y, label]) => (
              <ScaleMark key={label} $left={5} $tick style={{ top: y - 5 }}>
                {label}
              </ScaleMark>
            ))}
            <ScaleMark $left={5} $boxed style={{ top: 414 }}>
              1.25057
            </ScaleMark>
          </Scale>
        </PlotRow>
        <Divider />
        <PlotRow $height={115}>
          <Plot>
            <OscillatorChart />
          </Plot>
          <Scale>
            {oscMarks.map(([y, label]) => (
              <ScaleMark key={label} $left={2} style={{ top: y - 6 }}>
                {label}
              </ScaleMark>
            ))}
          </Scale>
        </PlotRow>
        <TimeScale>
          {times.map((t) => (
            <TimeMark key={t}>24 Jul {t}</TimeMark>
          ))}
        </TimeScale>
      </ChartWindow>

      <TabBar aria-label="Charts">
        {tabs.map(([name, width]) => (
          <Tab key={name} $width={width} $active={name === "USDCADm,M1"}>
            {name}
          </Tab>
        ))}
        <TabScroll aria-label="Scroll tabs left">
          <svg width={4} height={7} viewBox="0 0 4 7" aria-hidden="true">
            <path d="M4 0V7L0 3.5Z" fill="#999" />
          </svg>
        </TabScroll>
      </TabBar>

      <Terminal>
        <SideStrip>
          <CloseButton aria-label="Close panel">
            <Cross size={6} color="#000" />
          </CloseButton>
          <SideTitle>л</SideTitle>
        </SideStrip>
        <TableBox>
          <Orders>
            <colgroup>
              {columns.map(([name, width], i) => (
                <col key={name + i} width={width} />
              ))}
            </colgroup>
            <thead>
              <tr>
                {columns.map(([name], i) => (
                  <Head key={name + i} scope="col" $first={i === 0} $last={i === columns.length - 1}>
                    {name}
                    {name === "Объем" && <SortMark>/</SortMark>}
                  </Head>
                ))}
              </tr>
            </thead>
            <tbody>
              {orders.map((o, r) => {
                const selected = r === SELECTED;
                return (
                  <Row key={o[0]} $shade={r % 2 === 0} $selected={selected}>
                    <OrderCell $selected={selected}>
                      <OrderLine>
                        <OrderIcon sell={o[2] === "sell"} />
                        {o[0]}
                      </OrderLine>
                    </OrderCell>
                    {o.slice(1, -1).map((v, i) => (
                      <Cell key={i} $selected={selected}>
                        {v}
                      </Cell>
                    ))}
                    <ProfitCell $selected={selected}>
                      <ProfitLine>
                        {o[o.length - 1]}
                        <RowClose aria-label={`Close order ${o[0]}`}>
                          <Cross size={8} color="#999" />
                        </RowClose>
                      </ProfitLine>
                    </ProfitCell>
                  </Row>
                );
              })}
            </tbody>
          </Orders>
        </TableBox>
      </Terminal>
    </Page>
  );
}
